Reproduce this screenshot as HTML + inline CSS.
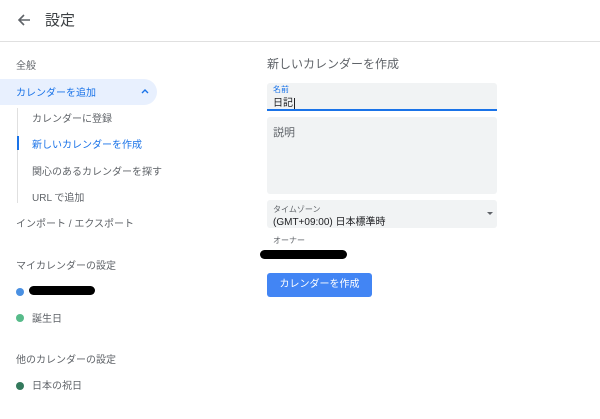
<!DOCTYPE html>
<html><head><meta charset="utf-8"><style>
*{margin:0;padding:0;box-sizing:border-box}
body{width:600px;height:419px;background:#fff;font-family:"Liberation Sans","Noto Sans CJK JP",sans-serif;position:relative;overflow:hidden;color:#3c4043}
.a{position:absolute;white-space:nowrap}
.s{font-size:10px;color:#5f6368}
</style></head><body>
<svg class="a" style="left:16px;top:12px" width="16" height="16" viewBox="0 0 16 16"><path d="M14 8H3M8 3L3 8l5 5" stroke="#5f6368" stroke-width="1.6" fill="none"/></svg>
<div class="a" style="left:45px;top:9px;font-size:15px;color:#3c4043">設定</div>
<div class="a" style="left:0;top:41px;width:600px;height:1px;background:#e0e0e0"></div>
<div class="a s" style="left:16px;top:57px">全般</div>
<div class="a" style="left:0;top:79px;width:157px;height:26px;background:#e8f0fe;border-radius:0 13px 13px 0"></div>
<div class="a" style="left:16px;top:84px;font-size:10px;color:#1a73e8">カレンダーを追加</div>
<svg class="a" style="left:141px;top:88px" width="8" height="6" viewBox="0 0 8 6"><path d="M1 5l3-3 3 3" stroke="#1a73e8" stroke-width="1.4" fill="none"/></svg>
<div class="a" style="left:17px;top:108px;width:1px;height:95px;background:#e0e0e0"></div>
<div class="a" style="left:17px;top:136px;width:2px;height:14px;background:#1a73e8"></div>
<div class="a s" style="left:32px;top:110px">カレンダーに登録</div>
<div class="a" style="left:32px;top:136px;font-size:10px;color:#1a73e8">新しいカレンダーを作成</div>
<div class="a s" style="left:32px;top:163px">関心のあるカレンダーを探す</div>
<div class="a s" style="left:32px;top:189px">URL で追加</div>
<div class="a s" style="left:16px;top:215px">インポート / エクスポート</div>
<div class="a s" style="left:16px;top:257px">マイカレンダーの設定</div>
<div class="a" style="left:16px;top:288px;width:8px;height:8px;border-radius:50%;background:#4a90e2"></div>
<div class="a" style="left:29px;top:286px;width:66px;height:9px;border-radius:5px;background:#000"></div>
<div class="a" style="left:16px;top:314px;width:8px;height:8px;border-radius:50%;background:#57bb8a"></div>
<div class="a s" style="left:32px;top:310px">誕生日</div>
<div class="a s" style="left:16px;top:351px">他のカレンダーの設定</div>
<div class="a" style="left:16px;top:382px;width:8px;height:8px;border-radius:50%;background:#33795c"></div>
<div class="a s" style="left:32px;top:377px">日本の祝日</div>

<div class="a" style="left:267px;top:55px;font-size:12px;color:#5f6368">新しいカレンダーを作成</div>
<div class="a" style="left:267px;top:83px;width:230px;height:28px;background:#f1f3f4;border-radius:3px 3px 0 0;border-bottom:2px solid #1a73e8"></div>
<div class="a" style="left:273px;top:84px;font-size:8px;color:#1a73e8">名前</div>
<div class="a" style="left:273px;top:94px;font-size:10px;color:#202124">日記<span style="border-left:1px solid #202124;margin-left:1px"></span></div>
<div class="a" style="left:267px;top:117px;width:230px;height:77px;background:#f1f3f4;border-radius:3px"></div>
<div class="a" style="left:273px;top:124px;font-size:11px;color:#5f6368">説明</div>
<div class="a" style="left:267px;top:200px;width:230px;height:28px;background:#f1f3f4;border-radius:3px"></div>
<div class="a" style="left:273px;top:204px;font-size:8px;color:#5f6368">タイムゾーン</div>
<div class="a" style="left:273px;top:213px;font-size:10px;color:#202124">(GMT+09:00) 日本標準時</div>
<div class="a" style="left:487px;top:212px;width:0;height:0;border-left:3px solid transparent;border-right:3px solid transparent;border-top:3px solid #5f6368"></div>
<div class="a" style="left:273px;top:235px;font-size:8px;color:#5f6368">オーナー</div>
<div class="a" style="left:260px;top:250px;width:87px;height:9px;border-radius:5px;background:#000"></div>
<div class="a" style="left:267px;top:273px;width:105px;height:24px;background:#4285f4;border-radius:3px;color:#fff;font-size:10px;text-align:center;line-height:23px">カレンダーを作成</div>
</body></html>
